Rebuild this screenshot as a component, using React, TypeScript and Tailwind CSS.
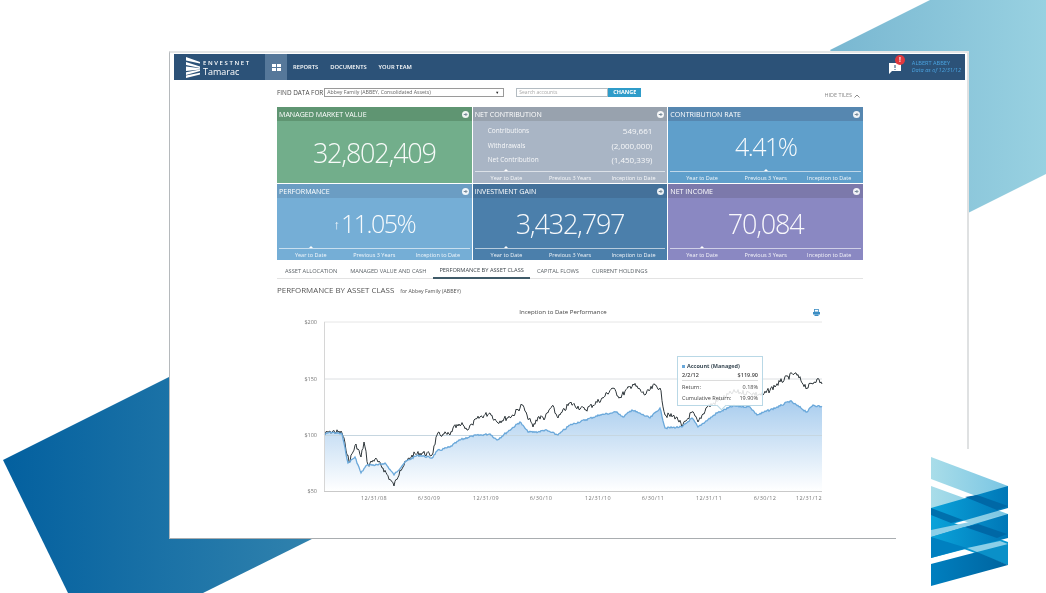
const blackPts = [
  [324, 435], [330, 431], [342, 433], [345, 443], [349, 462], [356, 444], [361, 457], [364, 442], [368, 465],
  [375, 459], [383, 468], [394, 486], [400, 470], [412, 455], [422, 453], [432, 455], [437, 435], [443, 434],
  [450, 435], [453, 428], [463, 425], [467, 430], [472, 424], [480, 417], [490, 413], [497, 422], [513, 415],
  [522, 405], [527, 415], [533, 427], [538, 417], [545, 418], [552, 406], [558, 418], [570, 403], [585, 410],
  [603, 398], [612, 388], [620, 397], [633, 384], [645, 395], [655, 385], [660, 388], [665, 415], [677, 417],
  [682, 427], [692, 412], [698, 422], [707, 407], [720, 400], [733, 392], [750, 393], [763, 395], [780, 382],
  [795, 373], [807, 388], [817, 379], [822, 384],
];

const bluePts = [
  [324, 435], [330, 432], [342, 434], [348, 463], [355, 457], [361, 473], [367, 465], [378, 465], [385, 463],
  [394, 475], [405, 462], [418, 455], [432, 458], [437, 451], [450, 447], [460, 440], [472, 436], [490, 434],
  [497, 440], [520, 422], [528, 432], [538, 432], [545, 430], [558, 435], [570, 425], [600, 415], [617, 412],
  [623, 417], [632, 410], [650, 418], [660, 408], [665, 428], [682, 427], [692, 418], [698, 427], [717, 413],
  [733, 406], [750, 407], [757, 415], [780, 406], [790, 401], [807, 412], [813, 405], [822, 407],
];

// walk the key points and add a little repeatable noise so the lines look like daily data
function wiggle(pts: number[][], amount: number) {
  let seed = 7;
  const out: string[] = [];
  for (let i = 0; i < pts.length - 1; i++) {
    const [x1, y1] = pts[i];
    const [x2, y2] = pts[i + 1];
    const steps = Math.max(1, Math.round(x2 - x1));
    for (let s = 0; s < steps; s++) {
      seed = (seed * 9301 + 49297) % 233280;
      const noise = s === 0 ? 0 : (seed / 233280 - 0.5) * amount;
      const t = s / steps;
      out.push(`${(x1 + (x2 - x1) * t).toFixed(1)},${(y1 + (y2 - y1) * t + noise).toFixed(1)}`);
    }
  }
  out.push(pts[pts.length - 1].join(','));
  return out;
}

const blackLine = wiggle(blackPts, 5.5);
const blueLine = wiggle(bluePts, 1.8);

const xLabels = [
  { x: 374, t: '12/31/08' },
  { x: 429, t: '6/30/09' },
  { x: 486, t: '12/31/09' },
  { x: 541, t: '6/30/10' },
  { x: 598, t: '12/31/10' },
  { x: 653, t: '6/30/11' },
  { x: 709, t: '12/31/11' },
  { x: 765, t: '6/30/12' },
  { x: 809, t: '12/31/12' },
];

const yLabels = [
  { y: 322, t: '$200' },
  { y: 379, t: '$150' },
  { y: 435, t: '$100' },
  { y: 491, t: '$50' },
];

const tabs = ['ASSET ALLOCATION', 'MANAGED VALUE AND CASH', 'PERFORMANCE BY ASSET CLASS', 'CAPITAL FLOWS', 'CURRENT HOLDINGS'];

function GoIcon() {
  return (
    <svg width="7" height="7" viewBox="0 0 12 12" className="shrink-0">
      <circle cx="6" cy="6" r="6" fill="#fff" fillOpacity="0.9" />
      <path d="M3 6h5M6 3.5 8.5 6 6 8.5" fill="none" stroke="#6b7f90" strokeWidth="1.6" />
    </svg>
  );
}

function Tile({
  title,
  head,
  body,
  active,
  children,
}: {
  title: string;
  head: string;
  body: string;
  active?: number;
  children: React.ReactNode;
}) {
  const periods = ['Year to Date', 'Previous 3 Years', 'Inception to Date'];
  return (
    <div className={`flex h-[76px] flex-col text-white ${body}`}>
      <div className={`flex h-[14px] shrink-0 items-center justify-between pl-[2px] pr-[3px] text-[7.1px] ${head}`}>
        <span>{title}</span>
        <GoIcon />
      </div>
      <div className="min-h-0 flex-1">{children}</div>
      {active !== undefined && (
        <div className="relative mx-[2px] flex h-[12px] shrink-0 items-center border-t border-white/60 pt-[1px] text-[5.5px] text-white/90">
          {periods.map((p, i) => (
            <span key={p} className="relative flex-1 text-center">
              {i === active && (
                <span className="absolute left-[calc(50%-2px)] top-[-5px] h-0 w-0 border-x-[2px] border-b-[2px] border-x-transparent border-b-white" />
              )}
              {p}
            </span>
          ))}
        </div>
      )}
    </div>
  );
}

function BigValue({ value }: { value: string }) {
  return (
    <div className="flex h-full items-center justify-center pt-[2px] text-[27px] font-light tracking-[-1.2px] text-white/95">
      {value}
    </div>
  );
}

function PercentValue({ value, arrow }: { value: string; arrow?: boolean }) {
  return (
    <div className="flex h-full items-center justify-center pt-[2px] text-[25px] font-light tracking-[-1.5px] text-white/95">
      {arrow && <span className="mr-[1px] mt-[2px] text-[13px] font-semibold tracking-normal">↑</span>}
      {value}
    </div>
  );
}

function Backdrop() {
  return (
    <svg width="1046" height="593" viewBox="0 0 1046 593" className="absolute left-0 top-0">
      <defs>
        <linearGradient id="bl" x1="0" x2="1" y1="0" y2="0">
          <stop offset="0" stopColor="#03609f" />
          <stop offset="1" stopColor="#3384ae" />
        </linearGradient>
        <linearGradient id="tr" x1="0" x2="1" y1="0" y2="0">
          <stop offset="0" stopColor="#79b7d1" />
          <stop offset="1" stopColor="#98d1e1" />
        </linearGradient>
      </defs>
      <polygon points="3,460 175,374 330,530 203,593 68,593" fill="url(#bl)" />
      <polygon points="830,50 930,0 1046,0 1046,174 960,217" fill="url(#tr)" />
    </svg>
  );
}

function TamaracMark() {
  return (
    <svg width="78" height="130" viewBox="931 457 78 130" className="absolute left-[931px] top-[457px]">
      <defs>
        <linearGradient id="lt" x1="0" x2="1" y1="0" y2="0">
          <stop offset="0" stopColor="#a9dde9" />
          <stop offset="1" stopColor="#79c5e3" />
        </linearGradient>
        <linearGradient id="md" x1="0" x2="1" y1="0" y2="0">
          <stop offset="0" stopColor="#0aa3da" />
          <stop offset="1" stopColor="#0077b7" />
        </linearGradient>
        <linearGradient id="dk" x1="0" x2="1" y1="0" y2="0">
          <stop offset="0" stopColor="#007fbf" />
          <stop offset="1" stopColor="#00649f" />
        </linearGradient>
      </defs>
      <polygon points="931,457 1008,486 1008,508 931,479" fill="url(#lt)" />
      <polygon points="931,486 1008,514 1008,538 931,508" fill="url(#lt)" />
      <polygon points="931,515 1008,542 1008,565 931,537" fill="#0a9ad2" />
      <polygon points="931,508 1008,486 1008,508 931,530" fill="url(#md)" />
      <polygon points="931,530 1008,514 1008,514 931,537" fill="#8ccfe8" />
      <polygon points="931,537 1008,514 1008,538 931,558" fill="url(#md)" />
      <polygon points="931,537 967,548 931,558" fill="#0080c0" />
      <polygon points="977,552 1008,543 1008,565" fill="#0a90c8" />
      <polygon points="967,548 1000,541 1008,544 977,552" fill="#8ccfe8" />
      <polygon points="931,564 977,552 1008,565 931,586" fill="url(#dk)" />
      <polygon points="965,497 977,495 1008,506 997,510" fill="#0068a6" />
      <polygon points="965,527 978,524 1007,534 997,538" fill="#0068a6" />
      <polygon points="931,508 963,520 951,523 931,515" fill="#0070ad" />
    </svg>
  );
}

export default function App() {
  return (
    <div className="relative h-[593px] w-[1046px] overflow-hidden bg-white font-['Open_Sans',sans-serif]">
      <Backdrop />
      <div className="relative ml-[169px] mt-[51px] h-[488px] w-[800px] border-l border-t-2 border-l-[#b5b9bc] border-t-[#e4e6e7] bg-white blur-[0.45px]">
        <div className="absolute right-0 top-0 h-[396px] w-[2px] bg-[#dfe1e2]" />
        <div className="absolute bottom-0 left-0 h-[1px] w-[726px] bg-[#a9adb0]" />

        <header className="mx-[4px] mt-[1px] flex h-[26px] items-center bg-[#2c5278] text-white">
          <div className="flex w-[91px] items-center pl-[12px]">
            <svg width="14" height="21" viewBox="0 0 14 21" className="shrink-0">
              <path d="M0 0l14 5v1.600L0 3.600zM0 5l14 4.400v1.600L0 8zM14 12.400v1.600L0 18v-2.800zM14 15.800v1.600L0 21v-2.400z" fill="#fff" />
              <path d="M0 9.400 14 11.200v1.200L0 14z" fill="#fff" />
            </svg>
            <div className="ml-[3px] mt-[2px]">
              <div className="text-[6px] font-semibold leading-[7px] tracking-[1.6px]">ENVESTNET</div>
              <div className="text-[9px] leading-[9px]">Tamarac</div>
            </div>
          </div>
          <div className="flex h-full w-[22px] items-center justify-center bg-[#56789a]">
            <svg width="9" height="7" viewBox="0 0 9 7" fill="#fff">
              <rect width="4" height="3" />
              <rect x="5" width="4" height="3" />
              <rect y="4" width="4" height="3" />
              <rect x="5" y="4" width="4" height="3" />
            </svg>
          </div>
          <nav className="ml-[6px] flex gap-[12px] text-[5.800px] font-semibold">
            <span>REPORTS</span>
            <span>DOCUMENTS</span>
            <span>YOUR TEAM</span>
          </nav>
          <div className="ml-auto flex items-center pr-[4px]">
            <div className="relative mr-[11px] h-[14px] w-[12px]">
              <svg width="12" height="12" viewBox="0 0 12 12" className="absolute bottom-0 left-0">
                <path d="M0 1h12v8H3L0 12z" fill="#fff" />
                <path d="M6 3v3M6 7v1" stroke="#2c5278" />
              </svg>
              <span className="absolute left-[6px] top-[-5px] flex h-[10px] w-[10px] items-center justify-center rounded-full bg-[#e0383e] text-[6.500px] font-bold">!</span>
            </div>
            <div className="text-[5.600px] leading-[7.500px] text-[#4aa3e0]">
              <div>ALBERT ABBEY</div>
              <div className="italic">Data as of 12/31/12</div>
            </div>
          </div>
        </header>

        <div className="pl-[107px]">
          <div className="mt-[8px] flex h-[9px] w-[586px] items-center">
            <span className="text-[6.400px] text-[#4a4a4a]">FIND DATA FOR</span>
            <div className="ml-[1px] flex h-[9px] w-[180px] items-center justify-between border border-[#9a9a9a] px-[2px] text-[5.200px] text-[#666]">
              <span>Abbey Family (ABBEY, Consolidated Assets)</span>
              <span className="mr-[2px] text-[4px] text-[#222]">▼</span>
            </div>
            <div className="ml-[12px] flex h-[9px] w-[92px] items-center border border-[#b4bcc2] px-[2px] text-[5px] text-[#a8a8a8]">
              Search accounts
            </div>
            <div className="flex h-[9px] w-[33px] items-center justify-center bg-[#2f9cc9] text-[5.500px] font-bold text-white">CHANGE</div>
            <div className="ml-auto mr-[3px] mt-[6px] flex items-center gap-[2px] text-[5.500px] text-[#8a8a8a]">
              HIDE TILES
              <svg width="6" height="4" viewBox="0 0 6 4">
                <path d="M.5 3.500 3 1l2.500 2.500" fill="none" stroke="#8a8a8a" />
              </svg>
            </div>
          </div>

          <div className="mt-[10px] grid w-[586px] grid-cols-3 gap-px">
            <Tile title="MANAGED MARKET VALUE" head="bg-[#5f9572]" body="bg-[#72ae8b]">
              <BigValue value="32,802,409" />
            </Tile>
            <Tile title="NET CONTRIBUTION" head="bg-[#98a2ae]" body="bg-[#a9b5c5]" active={0}>
              <div className="px-[15px] pt-[3px] leading-[14.500px] text-white/90">
                <div className="flex justify-between"><span className="text-[6.500px]">Contributions</span><span className="text-[8px]">549,661</span></div>
                <div className="flex justify-between"><span className="text-[6.500px]">Withdrawals</span><span className="text-[8px]">(2,000,000)</span></div>
                <div className="flex justify-between"><span className="text-[6.500px]">Net Contribution</span><span className="text-[8px]">(1,450,339)</span></div>
              </div>
            </Tile>
            <Tile title="CONTRIBUTION RATE" head="bg-[#5687b0]" body="bg-[#5f9fcb]" active={1}>
              <PercentValue value="4.41%" />
            </Tile>
            <Tile title="PERFORMANCE" head="bg-[#6b9dc3]" body="bg-[#75aed6]" active={0}>
              <PercentValue value="11.05%" arrow />
            </Tile>
            <Tile title="INVESTMENT GAIN" head="bg-[#44719a]" body="bg-[#4b7fab]" active={0}>
              <BigValue value="3,432,797" />
            </Tile>
            <Tile title="NET INCOME" head="bg-[#7c79ab]" body="bg-[#8a88c2]" active={0}>
              <BigValue value="70,084" />
            </Tile>
          </div>

          <div className="mt-[4px] flex h-[15px] w-[586px] items-center border-b border-[#e3e3e3] pl-[1.500px] text-[5.700px] text-[#5c6368]">
            {tabs.map((t, i) => (
              <span
                key={t}
                className={`-mb-px flex h-[15px] items-center px-[6.500px] ${i === 2 ? 'border-b-2 border-[#3f5a68] text-[#3e464c]' : ''}`}
              >
                {t}
              </span>
            ))}
          </div>

          <div className="mt-[6px] flex h-[10px] items-baseline text-[#555]">
            <span className="text-[7.900px]">PERFORMANCE BY ASSET CLASS</span>
            <span className="ml-[6px] text-[5.200px]">for Abbey Family (ABBEY)</span>
          </div>

          <div className="relative ml-[13px] mt-[5px] h-[210px] w-[545px]">
            <svg width="545" height="210" viewBox="290 300 545 210" className="block font-['Open_Sans',sans-serif]">
              <defs>
                <linearGradient id="area" x1="0" x2="0" y1="0" y2="1">
                  <stop offset="0" stopColor="#a9cdee" />
                  <stop offset="1" stopColor="#ffffff" />
                </linearGradient>
              </defs>
              <text x="563" y="314" textAnchor="middle" fontSize="6.100" fill="#444">Inception to Date Performance</text>
              <g fill="#3d8ec4">
                <rect x="814.500" y="309.500" width="4" height="2.500" fill="none" stroke="#3d8ec4" strokeWidth="0.8" />
                <rect x="813" y="312" width="7" height="2.500" />
                <rect x="814.500" y="314.500" width="4" height="1.500" />
              </g>
              <line x1="324" x2="822" y1="322" y2="322" stroke="#e6e6e6" />
              <line x1="324" x2="822" y1="379" y2="379" stroke="#dcdfe2" />
              <polygon points={`324,491 ${blueLine.join(' ')} 822,491`} fill="url(#area)" />
              <line x1="324" x2="822" y1="435.500" y2="435.500" stroke="#c6d6e0" />
              <polyline points={blackLine.join(' ')} fill="none" stroke="#30383c" strokeWidth="1" />
              <polyline points={blueLine.join(' ')} fill="none" stroke="#6aa8da" strokeWidth="1.300" />
              <line x1="324.500" x2="324.500" y1="322" y2="491" stroke="#d6d6d6" />
              <line x1="324" x2="822" y1="491.500" y2="491.500" stroke="#c9c9c9" />
              {yLabels.map((l) => (
                <text key={l.t} x="317" y={l.y + 2} textAnchor="end" fontSize="5.500" fill="#777">{l.t}</text>
              ))}
              {xLabels.map((l) => (
                <text key={l.t} x={l.x} y="500" textAnchor="middle" fontSize="5.500" letterSpacing="0.4" fill="#777">{l.t}</text>
              ))}
            </svg>

            <div className="absolute left-[387px] top-[56px] h-[50px] w-[86px] border border-[#b9d8e6] bg-white/85 px-[4px] pt-[4px] text-[5.500px] text-[#444]">
              <div className="flex h-[10px] items-center font-bold text-[#3a4a55]">
                <span className="mr-[2px] h-[3px] w-[3px] bg-[#6aa8da]" />
                Account (Managed)
              </div>
              <div className="flex h-[10px] items-center justify-between border-b border-[#dcdcdc] font-semibold">
                <span>2/2/12</span>
                <span>$119.90</span>
              </div>
              <div className="mt-[1px] flex h-[11px] items-center justify-between">
                <span>Return:</span>
                <span>0.18%</span>
              </div>
              <div className="flex h-[11px] items-center justify-between">
                <span>Cumulative Return:</span>
                <span>19.90%</span>
              </div>
              <span className="absolute bottom-[-4px] left-[40px] h-[7px] w-[7px] rotate-45 border-b border-r border-[#b9d8e6] bg-white" />
            </div>
          </div>
        </div>
      </div>
      <TamaracMark />
    </div>
  );
}
